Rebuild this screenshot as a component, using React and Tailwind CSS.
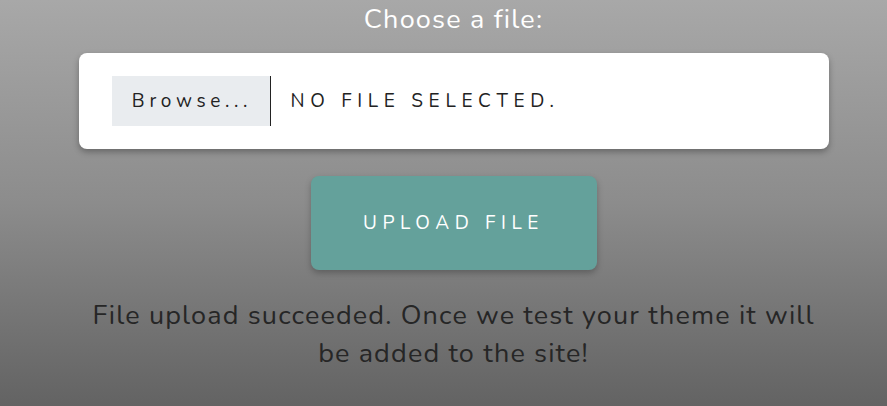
export default function App() {
  return (
    <div className="min-h-[406px] pl-5 bg-gradient-to-b from-[#a8a8a8] via-[#8c8c8c] to-[#636363] font-['Nunito','Noto_Sans',sans-serif] flex flex-col items-center">
      <h2 className="text-white text-[27px] leading-[40px] tracking-[1.2px] mt-0">Choose a file:</h2>
      <div className="mt-[13px] w-[750px] h-[96px] bg-white rounded-lg shadow-[0_3px_6px_rgba(0,0,0,0.3)] px-[33px] flex items-center">
        <div className="flex items-center h-[50px]">
          <span className="h-full w-[159px] pl-[3px] bg-[#e9ecef] border-r border-[#222] text-[#222] text-[19px] tracking-[4.7px] flex items-center justify-center">
            Browse...
          </span>
          <span className="pl-[20px] text-[#222] text-[19px] tracking-[5.7px] uppercase">No file selected.</span>
        </div>
      </div>
      <button className="mt-[27px] w-[286px] h-[94px] rounded-lg bg-[#64a19b] text-white text-[19px] tracking-[5.6px] uppercase shadow-[0_3px_6px_rgba(0,0,0,0.25)]">
        Upload file
      </button>
      <p className="mt-[27px] max-w-[750px] text-center text-[#262626] text-[27px] leading-[38px] tracking-[1.15px]">
        File upload succeeded. Once we test your theme it will be added to the site!
      </p>
    </div>
  );
}
